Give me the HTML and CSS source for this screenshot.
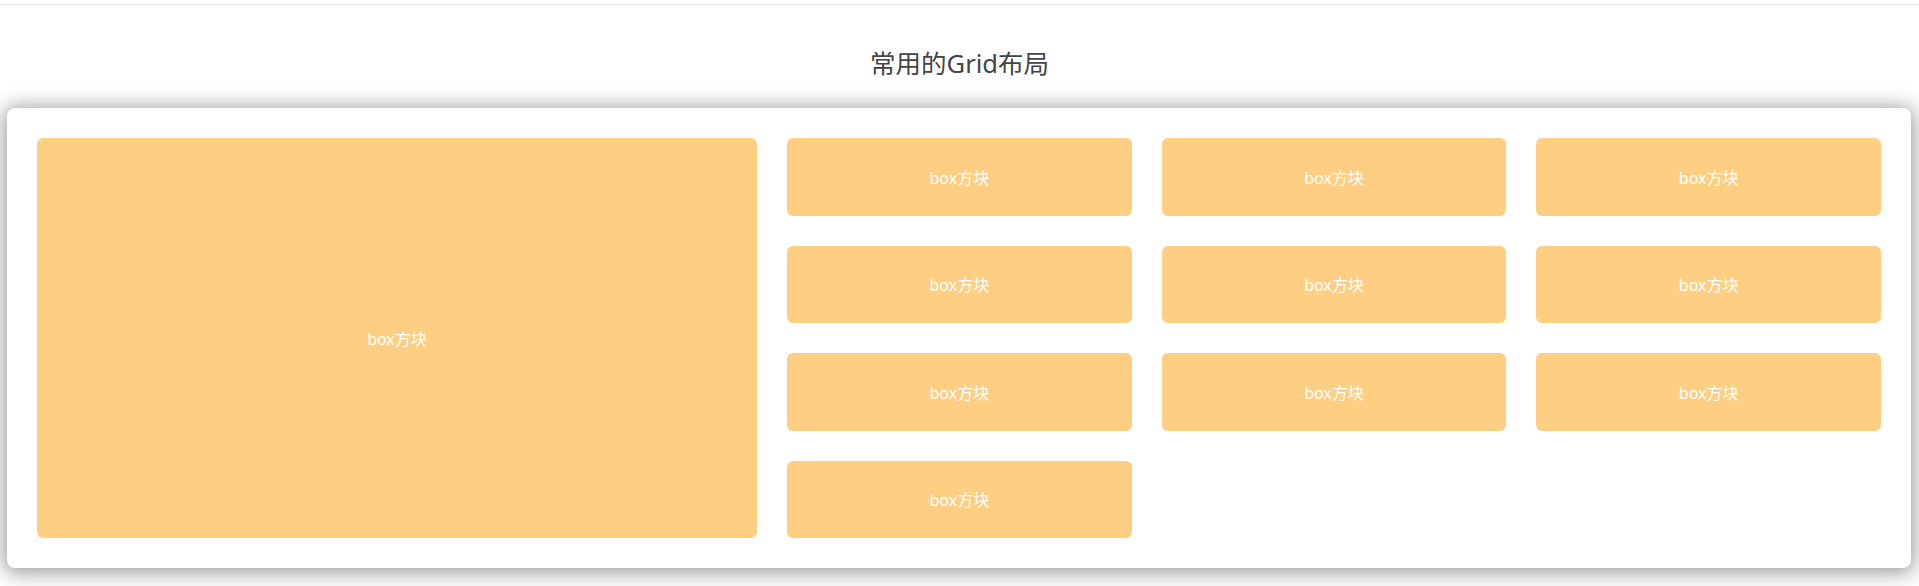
FILE: index.html
```html
<!DOCTYPE html>
<html lang="zh-CN">
<head>
<meta charset="utf-8">
<title>常用的Grid布局</title>
<link rel="stylesheet" href="styles.css">
</head>
<body>
<div class="topbar"></div>
<h2 class="title">常用的Grid布局</h2>
<div class="card">
  <div class="grid">
    <div class="box box-big">box方块</div>
    <div class="box">box方块</div>
    <div class="box">box方块</div>
    <div class="box">box方块</div>
    <div class="box">box方块</div>
    <div class="box">box方块</div>
    <div class="box">box方块</div>
    <div class="box">box方块</div>
    <div class="box">box方块</div>
    <div class="box">box方块</div>
    <div class="box">box方块</div>
  </div>
</div>
</body>
</html>
```

FILE: styles.css
```css
html, body {
  margin: 0;
  padding: 0;
  background: #ffffff;
  font-family: "Noto Sans", "Noto Sans CJK SC", sans-serif;
}

body {
  padding-bottom: 18px;
}

.topbar {
  height: 4px;
  border-bottom: 1px solid #e6e6e6;
}

.title {
  margin: 0;
  padding: 40px 0 27px;
  line-height: 36px;
  font-size: 25.5px;
  font-weight: normal;
  color: #444444;
  text-align: center;
}

.card {
  width: 1904px;
  margin-left: 7px;
  box-sizing: border-box;
  padding: 30px;
  background: #ffffff;
  border-radius: 8px;
  box-shadow: 0 2px 20px 3px rgba(0, 0, 0, 0.4);
}

.grid {
  display: grid;
  grid-template-columns: 720px repeat(3, 1fr);
  grid-template-rows: repeat(4, 1fr);
  gap: 30px;
  height: 400px;
}

.box {
  display: flex;
  align-items: center;
  justify-content: center;
  background: #fece82;
  color: #ffffff;
  font-size: 16px;
  border-radius: 6px;
}

.box-big {
  grid-row: 1 / span 4;
}
```
